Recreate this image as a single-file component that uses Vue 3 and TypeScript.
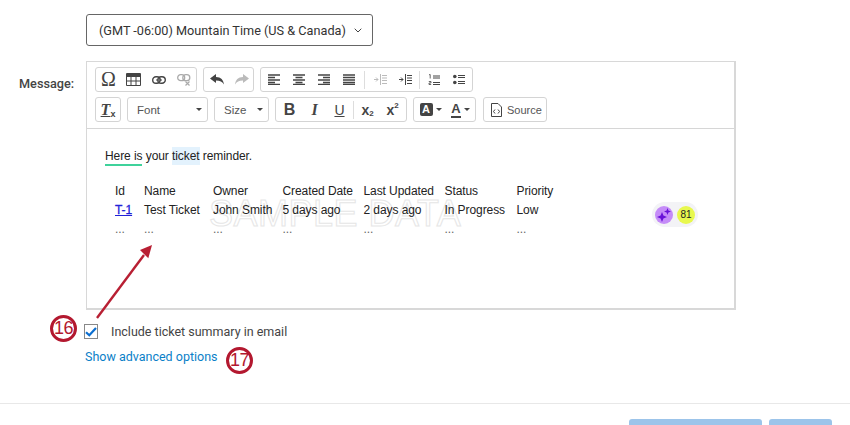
<template>
  <div class="page">
    <div class="tz-row">
      <button class="tz-select" type="button">
        <span>(GMT -06:00) Mountain Time (US &amp; Canada)</span>
        <svg width="8" height="5" viewBox="0 0 8 5"><path d="M.7.7 4 4l3.3-3.3" fill="none" stroke="#444" stroke-width="1" /></svg>
      </button>
    </div>

    <div class="message-row">
      <label class="message-label">Message:</label>
      <div class="editor">
        <div class="toolbar">
          <div class="tool-line">
            <div class="group g-insert">
              <span class="tool omega">Ω</span>
              <span class="tool">
                <svg width="15" height="13" viewBox="0 0 15 13"><path d="M.5.5h14v12H.5z" fill="#fff" stroke="#444" /><path d="M.5 1h14v3H.5z" fill="#444" /><path d="M.5 8h14M5 4v8.500M10 4v8.500" stroke="#444" fill="none" /></svg>
              </span>
              <span class="tool">
                <svg width="14" height="8" viewBox="0 0 14 8"><rect x=".7" y=".7" width="7.500" height="6.600" rx="3.300" fill="none" stroke="#444" stroke-width="1.400" /><rect x="5.800" y=".7" width="7.500" height="6.600" rx="3.300" fill="none" stroke="#444" stroke-width="1.400" /><path d="M4 4h6" stroke="#444" /></svg>
              </span>
              <span class="tool off">
                <svg width="14" height="12" viewBox="0 0 14 12"><rect x=".7" y=".7" width="7" height="6" rx="3" fill="none" stroke="#aaa" stroke-width="1.300" /><rect x="5.800" y=".7" width="7" height="6" rx="3" fill="none" stroke="#aaa" stroke-width="1.300" /><path d="M8.500 7.500l4 4m0-4l-4 4" stroke="#aaa" stroke-width="1.200" /></svg>
              </span>
            </div>
            <div class="group g-history">
              <span class="tool">
                <svg width="14" height="11" viewBox="0 0 14 11"><path d="M0 4.500 6 0v3c5 0 7.500 3 8 7.500C12.500 7.800 10 6.500 6 6.500V9z" fill="#444" /></svg>
              </span>
              <span class="tool off">
                <svg width="14" height="11" viewBox="0 0 14 11"><path d="M14 4.500 8 0v3C3 3 .5 6 0 10.500 1.500 7.800 4 6.500 8 6.500V9z" fill="#bbb" /></svg>
              </span>
            </div>
            <div class="group g-align">
              <span v-for="a in aligns" :key="a.name" class="tool">
                <svg width="12" height="11" viewBox="0 0 12 11">
                  <path :d="a.d" stroke="#444" stroke-width="1.300" fill="none" />
                </svg>
              </span>
              <i class="sep wide-gap"></i>
              <span class="tool off">
                <svg width="13" height="11" viewBox="0 0 13 11"><path d="M6.500 0v11M8 1.500h5M8 4h5M8 6.500h5M8 9.500h5M0 5.500h4M2 3.500l2 2-2 2" stroke="#bbb" fill="none" /></svg>
              </span>
              <span class="tool">
                <svg width="13" height="11" viewBox="0 0 13 11"><path d="M6.500 0v11M8 1.500h5M8 4h5M8 6.500h5M8 9.500h5M0 5.500h4M2 3.500l2 2-2 2" stroke="#444" fill="none" /></svg>
              </span>
              <i class="sep"></i>
              <span class="tool">
                <svg width="12" height="12" viewBox="0 0 12 12"><path d="M5 2h7M5 4h7M5 8.500h7M5 10.500h7" stroke="#444" fill="none" /><path d="M1 .8 2.200.5v4M.8 7.500h2.200v1.500H1v1.500h2.200" stroke="#444" stroke-width=".8" fill="none" /></svg>
              </span>
              <span class="tool">
                <svg width="12" height="11" viewBox="0 0 12 11"><circle cx="1.800" cy="2.500" r="1.800" fill="#444" /><circle cx="1.800" cy="8.500" r="1.800" fill="#444" /><path d="M5 1.500h7M5 3.500h7M5 7.500h7M5 9.500h7" stroke="#444" fill="none" /></svg>
              </span>
            </div>
          </div>

          <div class="tool-line">
            <div class="group g-clear">
              <span class="tool clear-format"><u>T</u><small>x</small></span>
            </div>
            <div class="group combo g-font">Font<i class="caret"></i></div>
            <div class="group combo g-size">Size<i class="caret"></i></div>
            <div class="group g-style">
              <span class="tool glyph bold">B</span>
              <span class="tool glyph ital">I</span>
              <span class="tool glyph under">U</span>
              <i class="sep"></i>
              <span class="tool glyph script">x<sub>2</sub></span>
              <span class="tool glyph script">x<sup>2</sup></span>
            </div>
            <div class="group g-color">
              <span class="tool color">
                <b class="color-box">A</b><i class="caret small"></i>
              </span>
              <span class="tool color">
                <b class="color-line">A</b><i class="caret small"></i>
              </span>
            </div>
            <div class="group g-source">
              <svg width="11" height="14" viewBox="0 0 11 14"><path d="M.5.500h6.500l3.500 3.500v9.500H.5z" fill="none" stroke="#444" /><path d="M4 6.500 2.500 8.500 4 10.500M7 6.500l1.500 2-1.500 2" fill="none" stroke="#444" /></svg>
              <span>Source</span>
            </div>
          </div>
        </div>

        <div class="content">
          <p class="intro"><span class="here">Here is</span> your <span class="ticket">ticket</span> reminder.</p>
          <div class="watermark">SAMPLE DATA</div>
          <table class="tickets">
            <thead>
              <tr>
                <th v-for="c in columns" :key="c">{{ c }}</th>
              </tr>
            </thead>
            <tbody>
              <tr>
                <td><a class="ticket-link">T-1</a></td>
                <td v-for="v in ticket" :key="v">{{ v }}</td>
              </tr>
              <tr class="dots">
                <td v-for="c in columns" :key="c">...</td>
              </tr>
            </tbody>
          </table>
          <div class="badge-pill">
            <span class="spark">
              <svg width="14" height="14" viewBox="0 0 14 14"><path d="M5 4l1.400 3.600L10 9l-3.600 1.400L5 14l-1.400-3.600L0 9l3.600-1.400zM10.500 0l.9 2.600 2.600.9-2.600.9-.9 2.600-.9-2.600-2.600-.9 2.600-.9z" fill="#6a12d8" /></svg>
            </span>
            <span class="score">81</span>
          </div>
        </div>
      </div>
    </div>

    <div class="include-row">
      <span class="checkbox">
        <svg width="12" height="10" viewBox="0 0 12 10"><path d="M1 5.200 4.300 8.300 11 1" fill="none" stroke="#0b6ed0" stroke-width="2.200" /></svg>
      </span>
      <span>Include ticket summary in email</span>
    </div>
    <a class="advanced">Show advanced options</a>

    <div class="footer">
      <span class="btn wide"></span>
      <span class="btn narrow"></span>
    </div>

    <svg class="arrow" width="70" height="90" viewBox="0 0 70 90">
      <path d="M6 78 53 15" stroke="#b81f33" stroke-width="2.400" fill="none" />
      <path d="M61 5 49 10 57.300 18.300z" fill="#b81f33" />
    </svg>
    <span class="callout c16">16</span>
    <span class="callout c17">17</span>
  </div>
</template>

<script setup lang="ts">
const columns: string[] = ['Id', 'Name', 'Owner', 'Created Date', 'Last Updated', 'Status', 'Priority']
const ticket: string[] = ['Test Ticket', 'John Smith', '5 days ago', '2 days ago', 'In Progress', 'Low']

const aligns = [
  { name: 'left', d: 'M0 1h12M0 3.500h7M0 6h12M0 8.500h7M0 10.500h12' },
  { name: 'center', d: 'M0 1h12M2.500 3.500h7M0 6h12M2.500 8.500h7M0 10.500h12' },
  { name: 'right', d: 'M0 1h12M5 3.500h7M0 6h12M5 8.500h7M0 10.500h12' },
  { name: 'justify', d: 'M0 1h12M0 3.500h12M0 6h12M0 8.500h12M0 10.500h12' }
]
</script>

<style>
html, body {
  margin: 0;
  background: #fff;
}
</style>

<style scoped>
.page {
  position: relative;
  width: 850px;
  height: 425px;
  overflow: hidden;
  background: #fff;
  font-family: "Liberation Sans", Arial, sans-serif;
  color: #333;
}
.tz-row {
  padding: 14px 0 0 86px;
}
.tz-select {
  display: flex;
  align-items: center;
  justify-content: space-between;
  box-sizing: border-box;
  width: 287px;
  height: 32px;
  padding: 0 10px 0 12px;
  border: 1px solid #666;
  border-radius: 3px;
  background: #fff;
  font: 12.700px Roboto, sans-serif;
  white-space: nowrap;
  color: #333;
}
.message-row {
  display: flex;
  margin-top: 15px;
  padding-left: 19px;
}
.message-label {
  width: 67px;
  padding-top: 15px;
  font: 500 12.700px/15px Roboto, sans-serif;
  color: #444;
}
.editor {
  box-sizing: border-box;
  width: 650px;
  height: 249px;
  border: 2px solid #d8d8d8;
  border-width: 1px 2px 2px 1px;
  display: flex;
  flex-direction: column;
}
.toolbar {
  box-sizing: border-box;
  height: 67px;
  padding: 5px 0 0 8px;
  border-bottom: 1px solid #d6d6d6;
  display: flex;
  flex-direction: column;
  gap: 5px;
}
.tool-line {
  display: flex;
  gap: 6px;
}
.group {
  box-sizing: border-box;
  height: 25px;
  border: 1px solid #d4d4d4;
  border-radius: 3px;
  display: flex;
  align-items: center;
  font-size: 11px;
  color: #444;
}
.tool {
  flex: 0 0 25px;
  height: 23px;
  display: flex;
  align-items: center;
  justify-content: center;
}
.omega {
  font: 20px "Liberation Serif", serif;
  color: #444;
}
.sep {
  width: 1px;
  height: 18px;
  background: #ddd;
  flex: none;
  margin: 0 1px;
}
.sep.wide-gap {
  margin: 0 3px;
}
.g-insert { width: 102px; }
.g-history { width: 51px; }
.g-align { width: 213px; }
.g-clear { width: 26px; }
.g-clear .tool { flex-basis: 24px; }
.clear-format {
  font: italic bold 16px "Liberation Serif", serif;
  color: #444;
}
.clear-format small {
  font: bold 9px "Liberation Sans", sans-serif;
  margin-top: 8px;
}
.combo {
  position: relative;
  padding-left: 9px;
  font-size: 11.500px;
  color: #555;
}
.g-font { width: 81px; }
.g-size { width: 55px; padding-left: 9px; }
.caret {
  position: absolute;
  right: 5px;
  top: 10px;
  border: 3px solid transparent;
  border-top-color: #444;
  border-bottom-width: 0;
}
.caret.small {
  position: static;
  margin-left: 3px;
}
.g-style { width: 132px; padding-left: 1px; }
.glyph {
  font-size: 14px;
  font-weight: 700;
  color: #444;
}
.bold { font-size: 16px; }
.ital { font: italic bold 16px "Liberation Serif", serif; }
.under { text-decoration: underline; font-weight: 400; }
.script {
  font-size: 14px;
  line-height: 1;
}
.script sub, .script sup {
  font-size: 8px;
  line-height: 8px;
}
.script sub { margin-top: 8px; }
.script sup { margin-bottom: 7px; }
.g-color { width: 63px; padding-left: 3px; gap: 3px; }
.color {
  flex-basis: 27px;
}
.color-box {
  display: inline-block;
  width: 13px;
  height: 13px;
  border-radius: 2px;
  background: #444;
  color: #fff;
  font-size: 11px;
  line-height: 13px;
  text-align: center;
}
.color-line {
  display: inline-block;
  height: 14px;
  font-size: 13px;
  line-height: 13px;
  border-bottom: 2px solid #444;
}
.g-source {
  width: 64px;
  margin-left: 1px;
  padding-left: 7px;
  gap: 5px;
  font-size: 11px;
  color: #555;
}
.content {
  position: relative;
  flex: 1;
  padding: 20px 0 0 18px;
  font-size: 12px;
  letter-spacing: -.08px;
  color: #222;
}
.intro {
  margin: 0 0 17px;
  line-height: 15px;
}
.here {
  padding-bottom: 1px;
  border-bottom: 2px solid #3fd29b;
}
.ticket {
  background: #e3f2fd;
  padding: 2px 0;
}
.tickets {
  position: relative;
  border-collapse: collapse;
  margin-left: 10px;
}
.tickets th, .tickets td {
  padding: 0;
  height: 20px;
  text-align: left;
  font-weight: 400;
  white-space: nowrap;
}
.tickets th {
  height: 19px;
}
.dots td {
  height: 18px;
  color: #666;
}
.tickets th:nth-child(1) { width: 29px; }
.tickets th:nth-child(2) { width: 69px; }
.tickets th:nth-child(3) { width: 69.500px; }
.tickets th:nth-child(4) { width: 81px; }
.tickets th:nth-child(5) { width: 81px; }
.tickets th:nth-child(6) { width: 72px; }
.ticket-link {
  color: #2222d8;
  -webkit-text-stroke: .3px #2222d8;
  text-decoration: underline;
}
.watermark {
  position: absolute;
  left: 122px;
  top: 64px;
  font-size: 36px;
  letter-spacing: .5px;
  white-space: nowrap;
  color: transparent;
  -webkit-text-stroke: 1px #e6e6e6;
  pointer-events: none;
}
.badge-pill {
  position: absolute;
  left: 565px;
  top: 73px;
  display: flex;
  align-items: center;
  gap: 4px;
  height: 25px;
  padding: 0 3px;
  border-radius: 13px;
  background: #f3f3f6;
}
.spark, .score {
  width: 18px;
  height: 18px;
  border-radius: 50%;
  display: flex;
  align-items: center;
  justify-content: center;
}
.spark {
  background: #c58cf8;
}
.score {
  background: #e8f84e;
  font-size: 10px;
  color: #222;
}
.include-row {
  display: flex;
  align-items: center;
  gap: 13px;
  margin: 14px 0 0 84px;
  font: 12.500px/15px Roboto, sans-serif;
  color: #444;
}
.checkbox {
  box-sizing: border-box;
  width: 14px;
  height: 15px;
  border: 1px solid #888;
  display: flex;
  align-items: center;
  justify-content: center;
}
.advanced {
  display: block;
  margin: 10px 0 0 85px;
  font: 12.500px/15px Roboto, sans-serif;
  color: #0b7fc8;
}
.footer {
  display: flex;
  justify-content: flex-end;
  gap: 7px;
  margin-top: 39px;
  padding: 15px 18px 0 0;
  border-top: 1px solid #e8e8e8;
}
.btn {
  height: 30px;
  border-radius: 3px;
  background: #9cc4ea;
}
.btn.wide { width: 133px; }
.btn.narrow { width: 63px; }
.arrow {
  position: absolute;
  left: 91px;
  top: 240px;
}
.callout {
  position: absolute;
  box-sizing: border-box;
  width: 27px;
  height: 27px;
  border: 3px solid #b3182f;
  border-radius: 50%;
  background: #fff;
  color: #b3182f;
  font: 18px/21px "Liberation Sans", sans-serif;
  text-align: center;
  letter-spacing: -.5px;
}
.c16 { left: 50px; top: 315px; }
.c17 { left: 226px; top: 347px; }
</style>
